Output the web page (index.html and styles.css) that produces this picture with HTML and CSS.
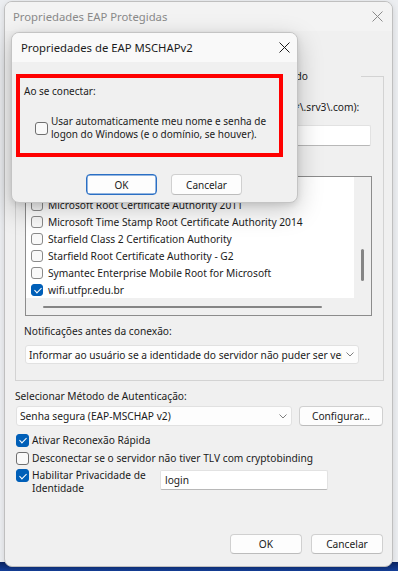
FILE: index.html
```html
<!DOCTYPE html>
<html lang="pt-BR">
<head>
    <meta charset="UTF-8">
    <title>Propriedades EAP Protegidas</title>
    <link rel="stylesheet" href="styles.css">
</head>
<body>

    <!-- main dialog (inactive, behind) -->
    <div class="dialog outer">
        <div class="titlebar">
            <span>Propriedades EAP Protegidas</span>
            <svg class="close" width="11" height="11" viewBox="0 0 11 11"><path d="M0.5 0.5L10.5 10.5M10.5 0.5L0.5 10.5" stroke="currentColor" stroke-width="1"/></svg>
        </div>
        <div class="dialog-body">
            <div class="caption">Ao conectar:</div>
            <div class="group">
                <label class="check group-title"><span class="box on"></span>Verificar a identidade do servidor validando o certificado</label>
                <label class="check servers"><span class="box"></span>Conectar a estes servidores (exemplos:srv1;srv2;.*\.srv3\.com):</label>
                <div class="textbox servers-input"></div>
                <div class="caption ca-caption">Autoridades de certificação raiz confiáveis:</div>
                <div class="listbox">
                    <div class="list-items">
                        <div class="list-item"><span class="box small"></span>Microsoft Root Certificate Authority 2010</div>
                        <div class="list-item"><span class="box small"></span>Microsoft Root Certificate Authority 2011</div>
                        <div class="list-item"><span class="box small"></span>Microsoft Time Stamp Root Certificate Authority 2014</div>
                        <div class="list-item"><span class="box small"></span>Starfield Class 2 Certification Authority</div>
                        <div class="list-item"><span class="box small"></span>Starfield Root Certificate Authority - G2</div>
                        <div class="list-item"><span class="box small"></span>Symantec Enterprise Mobile Root for Microsoft</div>
                        <div class="list-item"><span class="box small on"></span>wifi.utfpr.edu.br</div>
                    </div>
                    <div class="vscroll"><span class="thumb"></span></div>
                    <div class="hscroll"><span class="thumb"></span></div>
                    <div class="corner"></div>
                </div>
                <div class="caption notif-caption">Notificações antes da conexão:</div>
                <div class="combo notif-combo">
                    <span class="combo-text">Informar ao usuário se a identidade do servidor não puder ser verificada</span>
                    <svg class="chevron" width="8" height="5" viewBox="0 0 8 5"><path d="M0.5 0.5L4 4L7.5 0.5" fill="none" stroke="#707070" stroke-width="0.9"/></svg>
                </div>
            </div>

            <div class="caption method-caption">Selecionar Método de Autenticação:</div>
            <div class="method-row">
                <div class="combo method-combo">
                    <span class="combo-text">Senha segura (EAP-MSCHAP v2)</span>
                    <svg class="chevron" width="8" height="5" viewBox="0 0 8 5"><path d="M0.5 0.5L4 4L7.5 0.5" fill="none" stroke="#707070" stroke-width="0.9"/></svg>
                </div>
                <button class="btn config">Configurar...</button>
            </div>

            <label class="check fast"><span class="box on"></span>Ativar Reconexão Rápida</label>
            <label class="check crypto"><span class="box"></span>Desconectar se o servidor não tiver TLV com cryptobinding</label>
            <div class="privacy-row">
                <label class="check privacy"><span class="box on"></span><span class="privacy-text">Habilitar Privacidade de Identidade</span></label>
                <div class="textbox login">login</div>
            </div>

            <div class="actions">
                <button class="btn">OK</button>
                <button class="btn">Cancelar</button>
            </div>
        </div>
    </div>

    <!-- MSCHAPv2 dialog on top -->
    <div class="dialog inner">
        <div class="titlebar">
            <span>Propriedades de EAP MSCHAPv2</span>
            <svg class="close" width="11" height="11" viewBox="0 0 11 11"><path d="M0.5 0.5L10.5 10.5M10.5 0.5L0.5 10.5" stroke="currentColor" stroke-width="1"/></svg>
        </div>
        <div class="inner-body">
            <div class="redbox">
                <div class="caption">Ao se conectar:</div>
                <label class="check auto-logon"><span class="box"></span><span>Usar automaticamente meu nome e senha de<br>logon do Windows (e o domínio, se houver).</span></label>
            </div>
            <div class="inner-actions">
                <button class="btn default">OK</button>
                <button class="btn">Cancelar</button>
            </div>
        </div>
    </div>

</body>
</html>
```

FILE: styles.css
```css
/* Basic reset */
* {
    margin: 0;
    padding: 0;
    box-sizing: border-box;
}

body {
    position: relative;
    width: 398px;
    height: 571px;
    overflow: hidden;
    padding: 1px 0 0 4px;
    font-family: "Noto Sans", "Open Sans", sans-serif;
    font-size: 10.2px;
    color: #1b1b1b;
    /* desktop + taskbar strip */
    background: linear-gradient(to bottom, #eceef1 0, #eceef1 562px, #0b2462 562px, #15409a 571px);
}

/* Generic dialog window */
.dialog {
    display: flex;
    flex-direction: column;
    background-color: #f0f0f0;
    border: 1px solid #bfbfbf;
    border-radius: 8px;
    overflow: hidden;
}

.titlebar {
    display: flex;
    align-items: center;
    justify-content: space-between;
    font-size: 11.3px;
    flex-shrink: 0;
}

.close {
    display: block;
}

/* Outer dialog */
.outer {
    width: 389px;
    height: 566px;
    box-shadow: 0 2px 6px rgba(0, 0, 0, 0.12);
}

.outer .titlebar {
    height: 29px;
    padding: 0 9px 0 8px;
    background-color: #f3f3f3;
    color: #8a8a8a;
}

.dialog-body {
    flex: 1;
    display: flex;
    flex-direction: column;
    padding: 0 8px 12px 10px;
}

.caption {
    line-height: 14px;
    white-space: nowrap;
}

.dialog-body > .caption:first-child {
    margin-top: 12px;
}

/* Checkboxes */
.check {
    display: flex;
    align-items: center;
    gap: 3px;
    line-height: 16px;
    white-space: nowrap;
}

.box {
    position: relative;
    flex-shrink: 0;
    width: 13px;
    height: 13px;
    border: 1px solid #6f6f6f;
    border-radius: 3px;
    background-color: #f9f9f9;
}

.box.small {
    width: 12px;
    height: 12px;
    border-color: #8a8a8a;
}

.box.on {
    background-color: #005fb8;
    border-color: #005fb8;
}

.box.on::after {
    content: '';
    position: absolute;
    left: 3.5px;
    top: 1.5px;
    width: 3px;
    height: 6px;
    border-right: 1.2px solid #fff;
    border-bottom: 1.2px solid #fff;
    transform: rotate(45deg);
}

/* Group box */
.group {
    margin-top: 19px;
    border: 1px solid #d3d3d3;
    display: flex;
    flex-direction: column;
    padding-bottom: 16px;
}

.group-title {
    margin: -8px 0 0 4px;
    width: 341px;
    padding-left: 2px;
    line-height: 14px;
    background-color: #f0f0f0;
}

.servers {
    margin: 17px 0 0 28px;
    line-height: 14px;
}

.textbox {
    background-color: #ffffff;
    border: 1px solid #e2e2e2;
    border-bottom-color: #b8b8b8;
    border-radius: 2px;
}

.servers-input {
    height: 21px;
    margin: 11px 12px 0 44px;
}

.ca-caption {
    margin: 7px 0 0 8px;
}

/* Certificate list */
.listbox {
    height: 140px;
    margin: 9px 11px 0 9px;
    border: 1px solid #8c8c8c;
    display: grid;
    grid-template-columns: 1fr 17px;
    grid-template-rows: 1fr 17px;
    background-color: #f0f0f0;
}

.list-items {
    background-color: #ffffff;
    padding-top: 2px;
    overflow: hidden;
}

.list-item {
    display: flex;
    align-items: center;
    gap: 5px;
    height: 17px;
    padding-left: 5px;
    white-space: nowrap;
}

.vscroll .thumb {
    display: block;
    width: 2.5px;
    height: 32px;
    margin: 72px 0 0 7px;
    border-radius: 2px;
    background-color: #858585;
}

.hscroll .thumb {
    display: block;
    width: 279px;
    height: 2px;
    margin: 8px 0 0 17px;
    border-radius: 2px;
    background-color: #858585;
}

.notif-caption {
    margin: 8px 0 0 8px;
}

/* Combo boxes */
.combo {
    display: flex;
    align-items: center;
    height: 19px;
    background-color: #fdfdfd;
    border: 1px solid #e1e1e1;
    border-radius: 3px;
    padding-left: 3px;
}

.combo-text {
    flex: 1;
    overflow: hidden;
    white-space: nowrap;
}

.chevron {
    flex-shrink: 0;
    margin: 0 4px 0 4px;
}

.notif-combo {
    margin: 7px 24px 0 9px;
}

.method-caption {
    margin-top: 8px;
}

.method-row {
    display: flex;
    gap: 7px;
    margin: 3px 0 0 1px;
    height: 20px;
}

.method-combo {
    width: 276px;
    height: 20px;
}

/* Buttons */
.btn {
    display: flex;
    align-items: center;
    justify-content: center;
    width: 72px;
    height: 20px;
    font: inherit;
    color: #1b1b1b;
    background-color: #fdfdfd;
    border: 1px solid #d0d0d0;
    border-bottom-color: #bcbcbc;
    border-radius: 4px;
}

.btn.config {
    width: 84px;
}

.btn.default {
    border: 1px solid #2a6fc4;
    box-shadow: inset 0 0 0 0.5px #2a6fc4;
}

.fast {
    margin: 6px 0 0 1px;
}

.crypto {
    margin: 2px 0 0 1px;
}

.privacy-row {
    display: flex;
    align-items: flex-start;
    margin: 3px 0 0 1px;
}

.privacy {
    width: 144px;
    align-items: flex-start;
    white-space: normal;
    line-height: 13px;
}

.privacy-text {
    width: 124px;
}

.login {
    width: 168px;
    height: 20px;
    margin-top: 1px;
    padding: 2px 0 0 4px;
    line-height: 14px;
}

.actions {
    margin-top: auto;
    display: flex;
    justify-content: flex-end;
    gap: 9px;
    margin-right: 1px;
}

/* Inner MSCHAPv2 dialog */
.inner {
    position: absolute;
    left: 11px;
    top: 32px;
    width: 287px;
    height: 171px;
    border-color: #c4c4c4;
    box-shadow: 0 8px 26px rgba(0, 0, 0, 0.22), 0 2px 6px rgba(0, 0, 0, 0.10);
}

.inner .titlebar {
    height: 29px;
    padding: 0 7px 0 9px;
    background-color: #f9f9f9;
    color: #1b1b1b;
}

.inner-body {
    padding-left: 4px;
    font-size: 10px;
}

.redbox {
    width: 267px;
    height: 83px;
    margin-top: 12px;
    border: 4px solid #ff0000;
    padding: 6px 0 0 4px;
}

.auto-logon {
    margin: 17px 0 0 11px;
    line-height: 13px;
}

.inner-actions {
    display: flex;
    gap: 14px;
    margin: 17px 0 0 70px;
}

.inner-actions .btn {
    width: 71px;
    height: 21px;
}
```
